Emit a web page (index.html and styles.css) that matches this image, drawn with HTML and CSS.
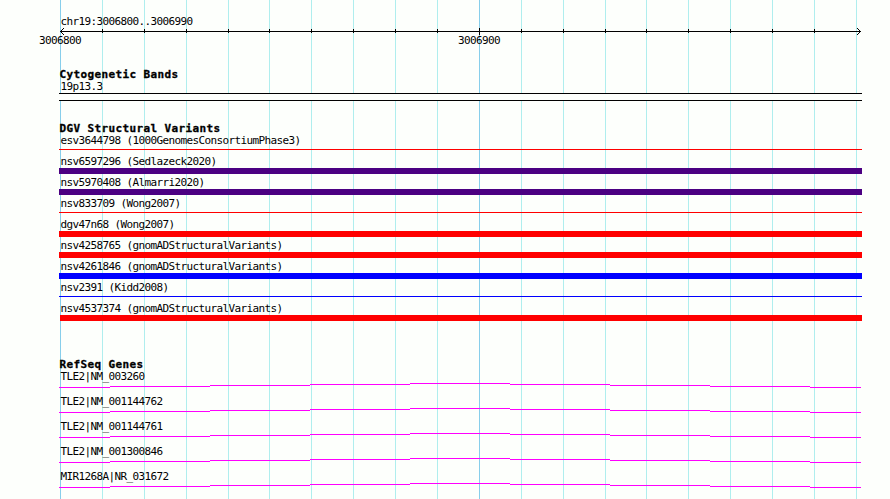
FILE: index.html
```
<!DOCTYPE html>
<html lang="en">
<head>
    <meta charset="UTF-8">
    <meta name="viewport" content="width=device-width, initial-scale=1.0">
    <title>chr19:3006800..3006990</title>
    <link rel="stylesheet" href="styles.css">
</head>
<body>
    <svg class="grid" width="890" height="499">
        <path class="minor" d="M102.5 0V499M144.5 0V499M186.5 0V499M228.5 0V499M269.5 0V499M311.5 0V499M353.5 0V499M395.5 0V499M437.5 0V499M521.5 0V499M563.5 0V499M605.5 0V499M646.5 0V499M688.5 0V499M730.5 0V499M772.5 0V499M814.5 0V499M856.5 0V499"/>
        <path class="major" d="M60.5 0V499M479.5 0V499"/>
    </svg>
    <div class="panel">
        <div class="ruler">
            <div class="label">chr19:3006800..3006990</div>
            <svg class="axis" width="803" height="7">
                <path d="M1 3.5H802M43.5 1V5M85.5 1V5M127.5 1V5M169.5 1V5M210.5 1V5M252.5 1V5M294.5 1V5M336.5 1V5M378.5 1V5M420.5 0V7M462.5 1V5M504.5 1V5M546.5 1V5M587.5 1V5M629.5 1V5M671.5 1V5M713.5 1V5M755.5 1V5"/>
                <path d="M4.5 0V1M3.5 1V2M2.5 2V3M2.5 4V5M3.5 5V6M4.5 6V7M798.5 0V1M799.5 1V2M800.5 2V3M800.5 4V5M799.5 5V6M798.5 6V7"/>
            </svg>
            <div class="scale">
                <span>3006800</span>
                <span>3006900</span>
            </div>
        </div>

        <div class="track bands">
            <h2>Cytogenetic Bands</h2>
            <div class="label">19p13.3</div>
            <div class="band"></div>
        </div>

        <div class="track variants">
            <h2>DGV Structural Variants</h2>
            <div class="row"><div class="label">esv3644798 (1000GenomesConsortiumPhase3)</div><div class="bar thin red"></div></div>
            <div class="row"><div class="label">nsv6597296 (Sedlazeck2020)</div><div class="bar indigo"></div></div>
            <div class="row"><div class="label">nsv5970408 (Almarri2020)</div><div class="bar indigo"></div></div>
            <div class="row"><div class="label">nsv833709 (Wong2007)</div><div class="bar thin red"></div></div>
            <div class="row"><div class="label">dgv47n68 (Wong2007)</div><div class="bar red"></div></div>
            <div class="row"><div class="label">nsv4258765 (gnomADStructuralVariants)</div><div class="bar red"></div></div>
            <div class="row"><div class="label">nsv4261846 (gnomADStructuralVariants)</div><div class="bar blue"></div></div>
            <div class="row"><div class="label">nsv2391 (Kidd2008)</div><div class="bar thin blue"></div></div>
            <div class="row"><div class="label">nsv4537374 (gnomADStructuralVariants)</div><div class="bar red inset"></div></div>
        </div>

        <div class="track genes">
            <h2>RefSeq Genes</h2>
            <svg width="0" height="0" class="defs">
                <path id="intron" d="M0 4.5H51M51 3.5H151M151 2.5H251M251 1.5H351M351 .5H451M451 1.5H551M551 2.5H651M651 3.5H751M751 4.5H802"/>
            </svg>
            <div class="gene"><div class="label">TLE2|NM_003260</div><svg width="803" height="5"><use href="#intron"/></svg></div>
            <div class="gene"><div class="label">TLE2|NM_001144762</div><svg width="803" height="5"><use href="#intron"/></svg></div>
            <div class="gene"><div class="label">TLE2|NM_001144761</div><svg width="803" height="5"><use href="#intron"/></svg></div>
            <div class="gene"><div class="label">TLE2|NM_001300846</div><svg width="803" height="5"><use href="#intron"/></svg></div>
            <div class="gene"><div class="label">MIR1268A|NR_031672</div><svg width="803" height="5"><use href="#intron"/></svg></div>
        </div>
    </div>
</body>
</html>
```
FILE: styles.css
```
body{
    margin: 0;
    height: 499px;
    overflow: hidden;
    background: #fdfffc;
    color: #000;
    font-family: "DejaVu Sans Mono", "Liberation Mono", monospace;
    font-size: 11px;
    line-height: 14px;
}
svg{
    display: block;
    fill: none;
    stroke-width: 1;
    shape-rendering: crispEdges;
}
.grid{
    position: absolute;
    top: 0;
    left: 0;
    z-index: -1;
}
.grid .minor{
    stroke: #afeeee;
}
.grid .major{
    stroke: #87ceeb;
}
.panel{
    width: 803px;
    margin-left: 59px;
    padding-top: 15px;
}
.label,
.scale{
    height: 12px;
    letter-spacing: -0.622px;
    white-space: nowrap;
}
.label{
    padding-left: 1.4px;
}
h2{
    margin: 0;
    padding-left: 0.6px;
    height: 12px;
    font-size: 11px;
    font-weight: bold;
    letter-spacing: 0.378px;
    -webkit-text-stroke: 0.3px #000;
}
.ruler{
    height: 53px;
}
.axis{
    margin-top: 1px;
    stroke: #000;
}
.scale{
    display: flex;
    gap: 377px;
    margin: -1px 0 0 -20px;
}
.scale span{
    width: 42px;
}
.bands{
    height: 54px;
}
.band{
    height: 6px;
    margin-top: 1px;
    border-top: 1px solid #000;
    border-bottom: 1px solid #000;
    background: #fdfffc;
}
.variants{
    height: 236px;
}
.row{
    height: 21px;
}
.bar{
    height: 6px;
    margin-top: 1px;
}
.thin{
    height: 1px;
    margin-top: 3px;
}
.inset{
    margin-left: 1px;
}
.red{
    background: #f00;
}
.blue{
    background: #00f;
}
.indigo{
    background: #4b0082;
}
.defs{
    position: absolute;
}
.gene{
    height: 25px;
}
.gene svg{
    margin-top: 1px;
    stroke: #f0f;
}
```
